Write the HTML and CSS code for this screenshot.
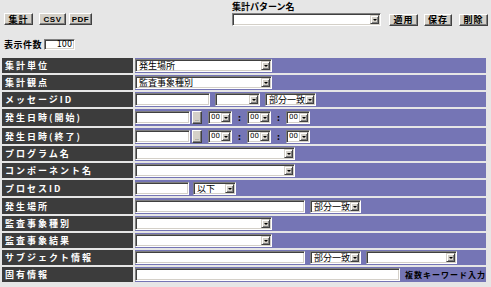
FILE: index.html
```html
<!DOCTYPE html>
<html lang="ja">
<head>
<meta charset="utf-8">
<link rel="stylesheet" href="styles.css">
</head>
<body>
<div class="top">
  <div class="left">
    <div class="btns">
      <button class="btn w29">集計</button>
      <button class="btn w27 en">CSV</button>
      <button class="btn w23 en">PDF</button>
    </div>
    <div class="count">
      <span class="clabel">表示件数</span>
      <input class="inp num" type="text" value="100">
    </div>
  </div>
  <div class="pattern">
    <div class="plabel">集計パターン名</div>
    <div class="prow">
      <span class="sel w149"><span class="txt"></span><span class="arr"></span></span>
      <button class="btn w29 ml8">適用</button>
      <button class="btn w28 ml6">保存</button>
      <button class="btn w29 ml7">削除</button>
    </div>
  </div>
</div>
<table class="form">
  <colgroup><col class="c1"><col class="c2"></colgroup>
  <tr><th>集計単位</th><td><span class="sel w137"><span class="txt">発生場所</span><span class="arr"></span></span></td></tr>
  <tr><th>集計観点</th><td><span class="sel w137"><span class="txt">監査事象種別</span><span class="arr"></span></span></td></tr>
  <tr><th>メッセージID</th><td><div class="cell"><input class="inp w75" type="text"><span class="sel w45 ml5"><span class="txt"></span><span class="arr"></span></span><span class="sel w51 ml5"><span class="txt">部分一致</span><span class="arr"></span></span></div></td></tr>
  <tr class="h17"><th>発生日時(開始)</th><td><div class="cell"><input class="inp w55" type="text"><button class="dots">..</button><span class="sel w24 ml6"><span class="txt num">00</span><span class="arr"></span></span><span class="colon">:</span><span class="sel w24"><span class="txt num">00</span><span class="arr"></span></span><span class="colon">:</span><span class="sel w24"><span class="txt num">00</span><span class="arr"></span></span></div></td></tr>
  <tr class="h16"><th>発生日時(終了)</th><td><div class="cell"><input class="inp w55" type="text"><button class="dots">..</button><span class="sel w24 ml6"><span class="txt num">00</span><span class="arr"></span></span><span class="colon">:</span><span class="sel w24"><span class="txt num">00</span><span class="arr"></span></span><span class="colon">:</span><span class="sel w24"><span class="txt num">00</span><span class="arr"></span></span></div></td></tr>
  <tr><th>プログラム名</th><td><span class="sel w160"><span class="txt"></span><span class="arr"></span></span></td></tr>
  <tr><th>コンポーネント名</th><td><span class="sel w160"><span class="txt"></span><span class="arr"></span></span></td></tr>
  <tr class="h16"><th>プロセスID</th><td><div class="cell"><input class="inp w54" type="text"><span class="sel w43 ml4"><span class="txt">以下</span><span class="arr"></span></span></div></td></tr>
  <tr class="h16"><th>発生場所</th><td><div class="cell"><input class="inp w170" type="text"><span class="sel w51 ml5"><span class="txt">部分一致</span><span class="arr"></span></span></div></td></tr>
  <tr><th>監査事象種別</th><td><span class="sel w137"><span class="txt"></span><span class="arr"></span></span></td></tr>
  <tr><th>監査事象結果</th><td><span class="sel w137"><span class="txt"></span><span class="arr"></span></span></td></tr>
  <tr><th>サブジェクト情報</th><td><div class="cell"><input class="inp w170" type="text"><span class="sel w51 ml5"><span class="txt">部分一致</span><span class="arr"></span></span><span class="sel w91 ml5"><span class="txt"></span><span class="arr"></span></span></div></td></tr>
  <tr><th>固有情報</th><td><div class="cell"><input class="inp w265" type="text"><span class="hint">複数キーワード入力</span></div></td></tr>
</table>
</body>
</html>
```
FILE: styles.css
```css
html, body {
  margin: 0;
  padding: 0;
  background: #e6e6e6;
  font-family: "Noto Sans CJK JP", "Noto Sans", sans-serif;
  font-size: 10px;
  color: #000;
}

.top {
  display: flex;
  height: 56px;
}

.left {
  width: 232px;
  padding: 13px 0 0 4px;
  box-sizing: border-box;
}

.btns {
  display: flex;
  height: 12px;
}

.btn {
  box-sizing: border-box;
  height: 12px;
  padding: 0;
  margin: 0;
  background: #d4d0c8;
  border: 1px solid;
  border-color: #fff #404040 #404040 #fff;
  box-shadow: inset -1px -1px #808080;
  font-family: "Noto Sans CJK JP", sans-serif;
  font-size: 9px;
  font-weight: bold;
  line-height: 9px;
  letter-spacing: 1px;
  color: #000;
  display: flex;
  align-items: center;
  justify-content: center;
  overflow: hidden;
}

.btn.en {
  font-family: "Liberation Sans", sans-serif;
  font-size: 8px;
  letter-spacing: 0.5px;
}

.w29 { width: 29px; }
.w27 { width: 27px; margin-left: 6px; }
.w23 { width: 23px; margin-left: 3px; }
.w28 { width: 28px; }

.ml4 { margin-left: 4px; }
.ml5 { margin-left: 5px; }
.ml6 { margin-left: 6px; }
.ml7 { margin-left: 7px; }
.ml8 { margin-left: 8px; }

.count {
  display: flex;
  align-items: center;
  margin-top: 14px;
  height: 11px;
}

.clabel {
  font-size: 9px;
  line-height: 11px;
  font-weight: bold;
  letter-spacing: 0.5px;
  width: 40px;
}

.inp {
  box-sizing: border-box;
  height: 13px;
  margin: 0;
  padding: 0 2px;
  background: #fff;
  border: 1px solid;
  border-color: #808080 #fff #fff #808080;
  box-shadow: inset 1px 1px #404040, inset -1px -1px #d4d0c8;
  font-family: "DejaVu Sans", sans-serif;
  font-size: 9px;
  outline: none;
}

.inp.num {
  width: 31px;
  height: 11px;
  text-align: right;
  font-size: 8px;
  line-height: 9px;
}

.pattern {
  padding-top: 2px;
}

.plabel {
  font-size: 9px;
  font-weight: bold;
  line-height: 10px;
  height: 11px;
}

.prow {
  display: flex;
  align-items: center;
  height: 13px;
}

.sel {
  box-sizing: border-box;
  display: inline-flex;
  align-items: stretch;
  height: 13px;
  background: #fff;
  border: 1px solid;
  border-color: #808080 #fff #fff #808080;
  box-shadow: inset 1px 1px #404040, inset -1px -1px #d4d0c8;
  padding: 1px;
  vertical-align: middle;
}

.sel .txt {
  flex: 1;
  min-width: 0;
  white-space: nowrap;
  padding-left: 2px;
  font-size: 9px;
  line-height: 9px;
  letter-spacing: 0;
}

.sel .txt.num {
  font-family: "DejaVu Sans", sans-serif;
  font-size: 7px;
  letter-spacing: 0;
  padding-left: 1px;
}

.sel .arr {
  width: 9px;
  flex: none;
  box-sizing: border-box;
  background: #d4d0c8;
  border: 1px solid;
  border-color: #d4d0c8 #404040 #404040 #d4d0c8;
  box-shadow: inset 1px 1px #fff, inset -1px -1px #808080;
  display: flex;
  align-items: center;
  justify-content: center;
}

.sel .arr::after {
  content: "";
  border-left: 2px solid transparent;
  border-right: 2px solid transparent;
  border-top: 2px solid #000;
  margin-top: 1px;
}

.w24 { width: 24px; }
.w43 { width: 43px; }
.w45 { width: 45px; }
.w51 { width: 51px; }
.w54 { width: 54px; }
.w55 { width: 55px; }
.w75 { width: 75px; }
.w91 { width: 91px; }
.w137 { width: 137px; }
.w149 { width: 149px; }
.w160 { width: 160px; }
.w170 { width: 170px; }
.w265 { width: 265px; }

.form {
  border-collapse: separate;
  border-spacing: 2px;
  width: 488px;
  margin: 0;
  table-layout: fixed;
}

.c1 { width: 131px; }

.form th, .form td {
  height: 15px;
  padding: 0;
  line-height: 11px;
}

.form tr.h16 th, .form tr.h16 td { height: 16px; }
.form tr.h17 th, .form tr.h17 td { height: 17px; }

.form th {
  background: #3c3c3c;
  color: #fff;
  text-align: left;
  font-weight: bold;
  font-size: 9px;
  letter-spacing: 2px;
  padding-left: 3px;
  white-space: nowrap;
  overflow: hidden;
}

.form td {
  background: #7575b5;
  vertical-align: middle;
}

.cell {
  display: flex;
  align-items: center;
}

.dots {
  box-sizing: border-box;
  width: 10px;
  height: 13px;
  margin: 0 0 0 2px;
  padding: 0;
  background: #d4d0c8;
  border: 1px solid;
  border-color: #fff #404040 #404040 #fff;
  box-shadow: inset -1px -1px #808080;
  font-family: "DejaVu Sans", sans-serif;
  font-size: 6px;
  line-height: 8px;
  color: #404040;
  display: flex;
  align-items: flex-end;
  justify-content: center;
}

.colon {
  width: 15px;
  text-align: center;
  font-weight: bold;
  font-size: 9px;
  color: #000;
}

.hint {
  margin-left: 5px;
  font-size: 8px;
  font-weight: bold;
  letter-spacing: 1px;
  color: #000;
  white-space: nowrap;
}
```
